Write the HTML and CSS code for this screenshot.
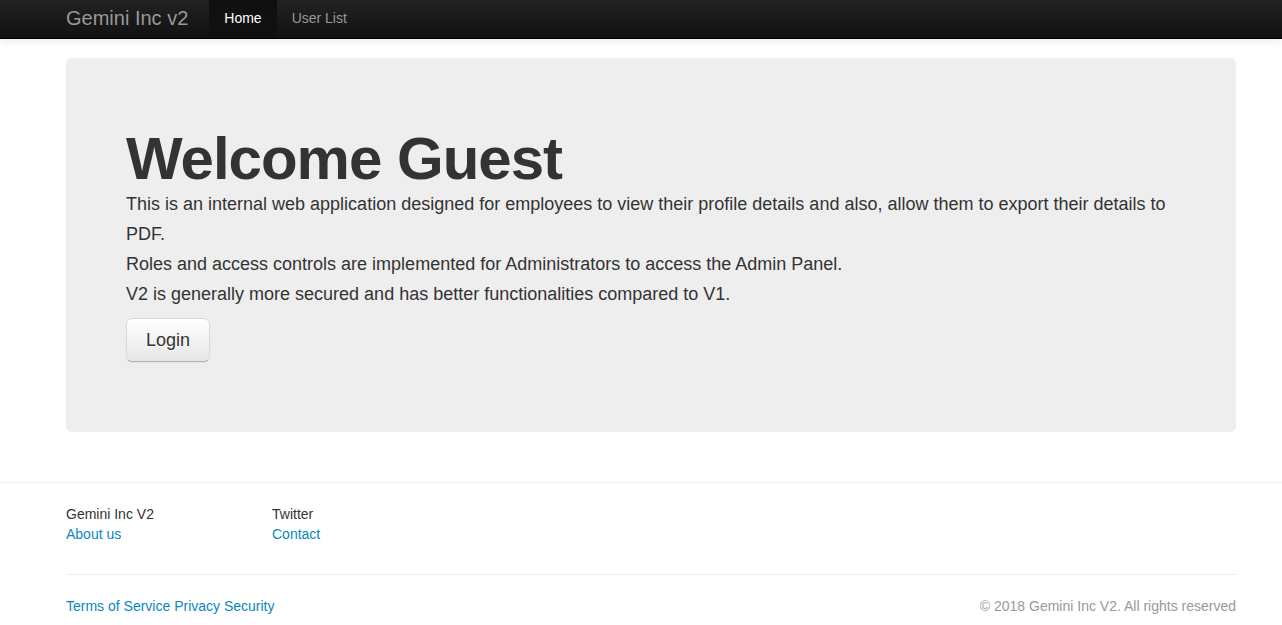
FILE: index.html
```html
<!DOCTYPE html>
<html lang="en">
<head>
<meta charset="utf-8">
<title>Gemini Inc v2</title>
<link rel="stylesheet" href="styles.css">
</head>
<body>
<header class="navbar">
  <div class="container navbar-inner">
    <a class="brand" href="#">Gemini Inc v2</a>
    <nav class="nav">
      <a class="nav-link active" href="#">Home</a>
      <a class="nav-link" href="#">User List</a>
    </nav>
  </div>
</header>
<main class="container">
  <section class="hero">
    <h1>Welcome Guest</h1>
    <p>This is an internal web application designed for employees to view their profile details and also, allow them to export their details to PDF.<br>Roles and access controls are implemented for Administrators to access the Admin Panel.<br>V2 is generally more secured and has better functionalities compared to V1.</p>
    <button class="btn" type="button">Login</button>
  </section>
</main>
<footer class="footer">
  <div class="container">
    <div class="columns">
      <ul class="column">
        <li>Gemini Inc V2</li>
        <li><a href="#">About us</a></li>
      </ul>
      <ul class="column">
        <li>Twitter</li>
        <li><a href="#">Contact</a></li>
      </ul>
    </div>
    <div class="legal">
      <div><a href="#">Terms of Service</a> <a href="#">Privacy</a> <a href="#">Security</a></div>
      <p class="muted">© 2018 Gemini Inc V2. All rights reserved</p>
    </div>
  </div>
</footer>
</body>
</html>
```
FILE: styles.css
```css
* { box-sizing: border-box; }

body {
  margin: 0;
  font-family: "Liberation Sans", Arial, sans-serif;
  font-size: 14px;
  line-height: 20px;
  color: #333;
  background: #fff;
}

a { color: #0887c1; text-decoration: none; }
a:hover { text-decoration: underline; }
p { margin: 0; }

.container {
  max-width: 1170px;
  margin: 0 46px 0 66px;
}

.navbar {
  background: linear-gradient(#222, #111);
  border-bottom: 1px solid #000;
  box-shadow: 0 1px 10px rgba(0, 0, 0, 0.1);
}

.navbar-inner { display: flex; }

.brand {
  padding: 8px 21px 10px 0;
  font-size: 20px;
  color: #999;
}

.nav { display: flex; }

.nav-link {
  padding: 8px 15px 10px;
  color: #999;
}

.nav-link.active {
  color: #fff;
  background: #111;
  box-shadow: inset 0 3px 8px rgba(0, 0, 0, 0.125);
}

.hero {
  margin-top: 19px;
  padding: 71px 60px 70px;
  border-radius: 6px;
  background: #eee;
  font-size: 18px;
  line-height: 30px;
}

.hero h1 {
  margin: 0;
  font-size: 60px;
  line-height: 60px;
  letter-spacing: -1px;
}

.btn {
  margin-top: 9px;
  padding: 11px 19px;
  border: 1px solid #ccc;
  border-color: #d9d9d9 #d9d9d9 #b3b3b3;
  border-radius: 6px;
  background: linear-gradient(#fff, #e6e6e6);
  box-shadow: inset 0 1px 0 rgba(255, 255, 255, 0.2), 0 1px 2px rgba(0, 0, 0, 0.05);
  font: 18px/20px "Liberation Sans", Arial, sans-serif;
  color: #333;
  text-shadow: 0 1px 1px rgba(255, 255, 255, 0.75);
  cursor: pointer;
}

.footer {
  margin-top: 50px;
  padding: 21px 0;
  border-top: 1px solid #eee;
}

.columns {
  display: flex;
  gap: 30px;
}

.column {
  flex: 0 0 176px;
  margin: 0;
  padding: 0;
  list-style: none;
}

.legal {
  display: flex;
  justify-content: space-between;
  margin-top: 30px;
  padding-top: 21px;
  border-top: 1px solid #eee;
}

.muted { color: #999; }
```
